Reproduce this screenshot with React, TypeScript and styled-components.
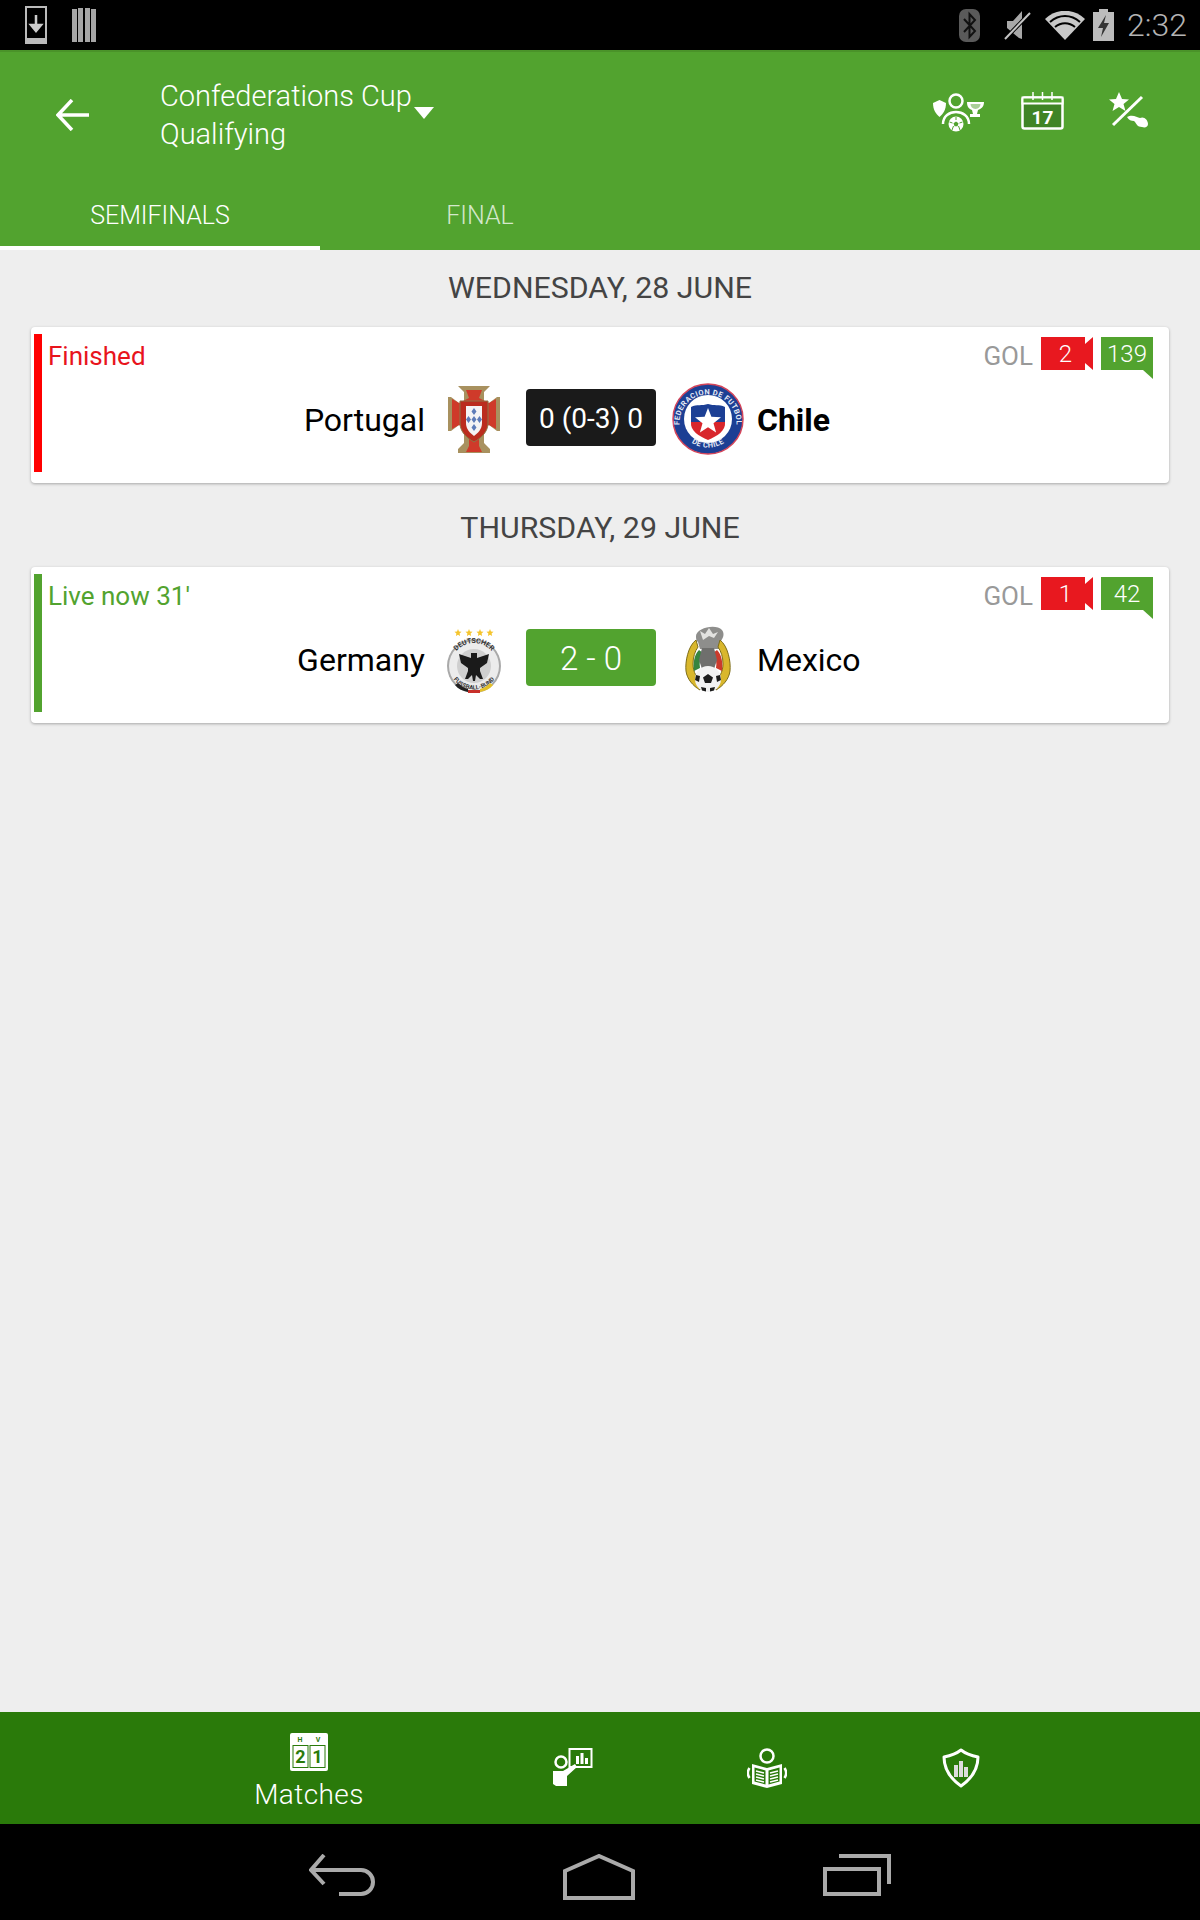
import React from "react";
import styled, { createGlobalStyle } from "styled-components";

const GREEN = "#52a32f";
const DARK_GREEN = "#2a7a0a";

const Global = createGlobalStyle`
  html, body {
    margin: 0;
    padding: 0;
    background: #eeeeee;
  }
  * {
    box-sizing: border-box;
  }
`;

const Page = styled.div`
  width: 1200px;
  height: 1920px;
  display: flex;
  flex-direction: column;
  font-family: Roboto, "Noto Sans", sans-serif;
  background: #eeeeee;
  overflow: hidden;
`;

const StatusBar = styled.div`
  height: 50px;
  flex: none;
  background: #000;
  display: flex;
  align-items: center;
  padding: 0 13px 0 25px;
`;

const StatusLeft = styled.div`
  display: flex;
  align-items: center;
  gap: 25px;
  flex: 1;
`;

const StatusRight = styled.div`
  display: flex;
  align-items: center;
`;

const StatusSlot = styled.div<{ $gap: number }>`
  display: flex;
  margin-right: ${(p) => p.$gap}px;
`;

const Clock = styled.span`
  font-size: 32px;
  font-weight: 300;
  color: #b4b4b4;
  margin-left: 1px;
`;

const Header = styled.header`
  height: 200px;
  flex: none;
  background: ${GREEN};
  display: flex;
  flex-direction: column;
  box-shadow: inset 0 2px 0 #4a9329;
`;

const Toolbar = styled.div`
  height: 134px;
  display: flex;
  align-items: center;
  padding: 0 51px 4px 56px;
`;

const BackButton = styled.div`
  width: 104px;
  display: flex;
  align-items: center;
`;

const Title = styled.div`
  display: flex;
  flex: 1;
  color: #fff;
  font-size: 29px;
  line-height: 38px;
  font-weight: 300;
`;

const Caret = styled.div`
  width: 0;
  height: 0;
  margin: 30px 0 0 2px;
  border-left: 10px solid transparent;
  border-right: 10px solid transparent;
  border-top: 12px solid #fff;
`;

const Actions = styled.div`
  display: flex;
  align-items: center;
  gap: 37px;
  margin-top: -8px;

  & > svg:last-child {
    margin-left: 8px;
  }
`;

const Tabs = styled.div`
  display: flex;
  height: 66px;
`;

const Tab = styled.div<{ $active?: boolean }>`
  width: 320px;
  display: flex;
  align-items: center;
  justify-content: center;
  padding-bottom: 0;
  font-size: 25px;
  font-weight: 300;
  color: ${(p) => (p.$active ? "#fff" : "#d4e8cb")};
  border-bottom: 4px solid ${(p) => (p.$active ? "#fff" : "transparent")};
`;

const Content = styled.main`
  flex: 1;
  padding: 0 31px;
`;

const DateHeading = styled.h2`
  margin: 0;
  height: 77px;
  display: flex;
  align-items: center;
  justify-content: center;
  padding-bottom: 3px;
  font-size: 30.3px;
  font-weight: 400;
  color: #444;
`;

const Card = styled.section`
  height: 156px;
  margin-bottom: 7px;
  background: #fff;
  border-radius: 4px;
  box-shadow: 0 1px 3px rgba(0, 0, 0, 0.3);
  padding: 7px 16px 11px 3px;
  display: flex;
`;

const StateBar = styled.div<{ $color: string }>`
  width: 8px;
  flex: none;
  background: ${(p) => p.$color};
`;

const CardBody = styled.div`
  flex: 1;
  display: flex;
  flex-direction: column;
`;

const CardTop = styled.div`
  display: flex;
  justify-content: space-between;
  align-items: flex-start;
  padding: 3px 0 0 6px;
  height: 49px;
`;

const MatchState = styled.span<{ $color: string }>`
  font-size: 26px;
  font-weight: 400;
  line-height: 38px;
  color: ${(p) => p.$color};
`;

const Odds = styled.div`
  display: flex;
  align-items: flex-start;
  gap: 8px;
`;

const Gol = styled.span`
  font-size: 26px;
  font-weight: 400;
  line-height: 38px;
  color: #999;
`;

const RedBadge = styled.div`
  width: 52px;
  height: 33px;
  padding-right: 3px;
  display: flex;
  align-items: center;
  justify-content: center;
  color: #fff;
  font-size: 24px;
  font-weight: 300;
  background: #e8181f;
  clip-path: polygon(0 0, 44px 0, 44px 7px, 52px 0, 52px 33px, 44px 26px, 44px 33px, 0 33px);
`;

const GreenBadge = styled.div`
  position: relative;
  width: 52px;
  height: 33px;
  display: flex;
  align-items: center;
  justify-content: center;
  color: #fff;
  font-size: 24px;
  font-weight: 300;
  background: ${GREEN};

  &::after {
    content: "";
    position: absolute;
    right: 0;
    top: 33px;
    border-top: 9px solid ${GREEN};
    border-left: 10px solid transparent;
  }
`;

const MatchRow = styled.div`
  display: grid;
  grid-template-columns: 1fr 130px 1fr;
  column-gap: 16px;
  align-items: center;
  height: 72px;
  padding-right: 13px;
`;

const Team = styled.div<{ $away?: boolean }>`
  display: flex;
  align-items: center;
  justify-content: ${(p) => (p.$away ? "flex-start" : "flex-end")};
  gap: 13px;
`;

const TeamName = styled.span<{ $winner?: boolean }>`
  font-size: 32px;
  font-weight: ${(p) => (p.$winner ? 700 : 400)};
  color: #000;
  padding-top: 2px;
`;

const Score = styled.div<{ $live?: boolean }>`
  height: 57px;
  margin-top: -3px;
  padding-top: 1px;
  display: flex;
  align-items: center;
  justify-content: center;
  border-radius: 4px;
  color: #fff;
  background: ${(p) => (p.$live ? GREEN : "#1a1a1a")};
  font-weight: ${(p) => (p.$live ? 300 : 400)};
  font-size: ${(p) => (p.$live ? "33px" : "28px")};
`;

const BottomNav = styled.nav`
  height: 112px;
  flex: none;
  background: ${DARK_GREEN};
  display: flex;
  justify-content: center;
`;

const NavItem = styled.div<{ $wide?: boolean }>`
  width: ${(p) => (p.$wide ? "334px" : "194px")};
  display: flex;
  flex-direction: column;
  align-items: center;
  padding-top: ${(p) => (p.$wide ? "21px" : "36px")};
  color: #fff;
  font-size: 28px;
  font-weight: 300;
`;

const NavLabel = styled.span`
  line-height: 32px;
  margin-top: 8px;
  letter-spacing: 0.4px;
`;

const SystemBar = styled.div`
  height: 96px;
  flex: none;
  background: #000;
  display: flex;
  justify-content: center;
  align-items: flex-start;
  padding-top: 30px;
  gap: 188px;
`;

const DownloadIcon = () => (
  <svg width="22" height="38" viewBox="0 0 22 38">
    <rect x="1" y="1" width="20" height="36" fill="none" stroke="#bbb" strokeWidth="2" />
    <rect x="1" y="32" width="20" height="5" fill="#bbb" />
    <path d="M11 9v15M6 19l5 6 5-6z" stroke="#ccc" strokeWidth="2.5" fill="#ccc" />
  </svg>
);

const BarsIcon = () => (
  <svg width="24" height="34" viewBox="0 0 24 34">
    <path d="M0 1h5v33H0zM6 0h5v34H6zM13 0h5v34h-5zM19 1h5v33h-5z" fill="#a6a6a6" />
  </svg>
);

const BluetoothIcon = () => (
  <svg width="21" height="33" viewBox="0 0 21 33">
    <rect width="21" height="33" rx="7" fill="#5a5a5a" />
    <path d="M5 10l11 12-5.500 6V5l5.500 6L5 23" fill="none" stroke="#111" strokeWidth="2" />
  </svg>
);

const MuteIcon = () => (
  <svg width="28" height="32" viewBox="0 0 28 32">
    <path d="M3 12h6l9-10v28l-3-1L3 19z" fill="#a8a8a8" />
    <path d="M1 30L26 4" stroke="#000" strokeWidth="4" />
    <path d="M1 30L26 4" stroke="#c4c4c4" strokeWidth="2" />
  </svg>
);

const WifiIcon = () => (
  <svg width="40" height="29" viewBox="0 0 40 29">
    <path d="M20 29L0 8c11-11 29-11 40 0z" fill="#c8c8c8" />
    <path d="M5 11c9-8 21-8 30 0M10 16c6-5 14-5 20 0" fill="none" stroke="#000" strokeWidth="2" />
  </svg>
);

const BatteryIcon = () => (
  <svg width="21" height="32" viewBox="0 0 21 32">
    <path d="M6 0h9v3h6v29H0V3h6z" fill="#bcbcbc" />
    <path d="M13 6L5 19h5l-2 9 8-14h-5z" fill="#333" />
  </svg>
);

const BackArrow = () => (
  <svg width="33" height="32" viewBox="0 0 33 32">
    <path d="M33 16H3M16 1L2 16l14 15" fill="none" stroke="#fff" strokeWidth="3.500" />
  </svg>
);

const PlayerIcon = () => (
  <svg width="52" height="41" viewBox="0 0 52 41">
    <path d="M1 12l6.500-3 6.500 3c0 7-3 11-6.500 14C4 23 1 19 1 12z" fill="#fff" />
    <circle cx="24" cy="10" r="6.500" fill="none" stroke="#fff" strokeWidth="2.500" />
    <path d="M11 33c0-16 26-16 26 0" fill="none" stroke="#fff" strokeWidth="2.500" />
    <circle cx="24" cy="33" r="7.500" fill="#fff" />
    <path d="M24 30.500l2.500 1.800-1 2.900h-3l-1-2.900z" fill={GREEN} />
    <path d="M24 26v3M17.500 31l3 1M30.500 31l-3 1M20 39l1.500-4M28 39l-1.500-4" stroke={GREEN} strokeWidth="1" />
    <path d="M35 11h17c0 5-3 7-6 8l-1 4h3v3h-10v-3h3l-1-4c-3-1-5-3-5-8z" fill="#fff" />
    <path d="M38.500 13h10c0 3-2 4.500-5 5-3-.5-5-2-5-5z" fill="#a9cf98" />
  </svg>
);

const CalendarIcon = () => (
  <svg width="43" height="38" viewBox="0 0 43 38">
    <rect x="1.500" y="5.500" width="40" height="31" rx="2" fill="#3f8426" stroke="#fff" strokeWidth="2.500" />
    <rect x="1.500" y="5.500" width="40" height="6" fill={GREEN} stroke="#fff" strokeWidth="2" />
    <path d="M12 0v8M21.500 0v8M31 0v8" stroke="#fff" strokeWidth="1.500" />
    <text x="21.500" y="32" textAnchor="middle" fill="#fff" fontSize="19" fontWeight="700" fontFamily="Roboto, sans-serif">
      17
    </text>
  </svg>
);

const PredictionIcon = () => (
  <svg width="40" height="38" viewBox="0 0 40 38">
    <path d="M10 0l3 7 7 .5-5.500 4.500 2 7-6.500-4-6.500 4 2-7L0 7.500 7 7z" fill="#fff" />
    <path d="M4 33L33 5" stroke="#fff" strokeWidth="3" />
    <path d="M18 25c5-3 10 0 13 1 4-2 8 2 8 6 0 3-3 4-6 3-5 0-5-3-8-6-3 0-5-1-7-4z" fill="#fff" />
  </svg>
);

const PortugalCrest = () => (
  <svg width="72" height="72" viewBox="0 0 72 72">
    <path d="M20 3h32l-6 6v9l5 2 8-6h3v34h-3l-8-6-5 2v16l6 6v4H20v-4l6-6V44l-5-2-8 6h-3V14h3l8 6 5-2V9z" fill="#a8915f" />
    <path d="M28 7h16l-3 8 10 5 7-4v30l-7-4-10 5v16l3 6H28l3-6V47l-10-5-7 4V16l7 4 10-5z" fill="#cf3a2a" />
    <path d="M22 18h28v22c0 9-7 15-14 19-7-4-14-10-14-19z" fill="#bb2d1e" stroke="#8d7646" strokeWidth="1" />
    <path d="M28 23h16v17c0 6-4 10-8 13-4-3-8-7-8-13z" fill="#f4f4f4" />
    <path d="M36 25l2.500 3.500-2.500 3.500-2.500-3.500zM36 33l2.500 3.500-2.500 3.500-2.500-3.500zM36 41l2.500 3.500-2.500 3.500-2.500-3.500zM30.500 33l2.500 3.500-2.500 3.500-2.500-3.500zM41.500 33l2.500 3.500-2.500 3.500-2.500-3.500z" fill="#5d7cb8" />
  </svg>
);

const ChileCrest = () => (
  <svg width="72" height="72" viewBox="0 0 72 72">
    <defs>
      <path id="chile-top" d="M7.500 40a28.500 28.500 0 1 1 57 0" />
      <path id="chile-bottom" d="M12 52a29 29 0 0 0 48 0" />
    </defs>
    <circle cx="36" cy="36" r="35" fill="#1c3f94" stroke="#d4455a" strokeWidth="1.500" />
    <circle cx="36" cy="36" r="24" fill="#fff" />
    <text fill="#e6eaf5" fontSize="7.500" fontWeight="700" fontFamily="Roboto, sans-serif" letterSpacing="0.4">
      <textPath href="#chile-top" startOffset="50%" textAnchor="middle">
        FEDERACION DE FUTBOL
      </textPath>
    </text>
    <text fill="#e6eaf5" fontSize="7.500" fontWeight="700" fontFamily="Roboto, sans-serif" letterSpacing="0.4">
      <textPath href="#chile-bottom" startOffset="50%" textAnchor="middle">
        DE CHILE
      </textPath>
    </text>
    <path d="M19 24c6-3 11-1 17-3 6 2 11 0 17 3v15H19z" fill="#1c3f94" />
    <path d="M19 39h34c1 9-8 14-17 18-9-4-18-9-17-18z" fill="#d8262c" />
    <path d="M36 25l3.400 8.800 9.600.4-7.500 6 2.600 9.300-8.100-5.300-8.100 5.300 2.600-9.300-7.500-6 9.600-.4z" fill="#fff" />
  </svg>
);

const GermanyCrest = () => (
  <svg width="72" height="72" viewBox="0 0 72 72">
    <defs>
      <path id="ger-top" d="M13 43a23 23 0 0 1 46 0" />
      <path id="ger-bottom" d="M11 46a25.500 25.500 0 0 0 50 0" />
    </defs>
    <path d="M20 6l1 2.500 2.500.3-1.900 1.700.5 2.500-2.100-1.300-2.100 1.300.5-2.500-1.900-1.700 2.500-.3zM31 6l1 2.500 2.500.3-1.900 1.700.5 2.500-2.100-1.300-2.100 1.300.5-2.500-1.900-1.700 2.500-.3zM42 6l1 2.500 2.500.3-1.900 1.700.5 2.500-2.100-1.300-2.100 1.300.5-2.500-1.900-1.700 2.500-.3zM52 6l1 2.500 2.500.3-1.900 1.700.5 2.500-2.100-1.300-2.100 1.300.5-2.500-1.900-1.700 2.500-.3z" fill="#f5c52e" />
    <circle cx="36" cy="43" r="27" fill="#a9a9a9" />
    <circle cx="36" cy="43" r="25" fill="#ececec" />
    <circle cx="36" cy="43" r="17" fill="#cfcfcf" />
    <text fill="#333" fontSize="7" fontWeight="700" fontFamily="Roboto, sans-serif">
      <textPath href="#ger-top" startOffset="50%" textAnchor="middle">
        DEUTSCHER
      </textPath>
    </text>
    <text fill="#333" fontSize="6" fontWeight="700" fontFamily="Roboto, sans-serif">
      <textPath href="#ger-bottom" startOffset="50%" textAnchor="middle">
        FUSSBALL-BUND
      </textPath>
    </text>
    <path d="M20 60c3 3 6 5 10 6v3c-5-1-10-3-13-7z" fill="#222" />
    <path d="M30 67h12v3H30z" fill="#c8302a" />
    <path d="M42 69c5-1 10-3 13-7l-3-2c-3 3-6 5-10 6z" fill="#e4c029" />
    <path d="M33 30h6v5l3-1 9-3-2 9-7 5v3l3 8h-3l-4-4-1 6h-2l-1-6-4 4h-3l3-8v-3l-7-5-2-9 9 3 3 1z" fill="#1a1a1a" />
  </svg>
);

const MexicoCrest = () => (
  <svg width="72" height="72" viewBox="0 0 72 72">
    <path d="M24 13c0-8 20-13 26-6 3 4 1 8-1 11l-2 8H28l-2-7c-2-1-2-4-2-6z" fill="#8e8e8c" />
    <path d="M28 8l5 3 4-6 4 6 5-2-4 6-5-2-6 4z" fill="#e2e2e0" />
    <path d="M24 17c-8 6-11 22-10 31 1 8 7 15 14 19l3-6c-6-5-10-12-10-20 0-7 2-13 5-17z" fill="#d9b72c" stroke="#7e6d18" strokeWidth="1" />
    <path d="M48 17c8 6 11 22 10 31-1 8-7 15-14 19l-3-6c6-5 10-12 10-20 0-7-2-13-5-17z" fill="#d9b72c" stroke="#7e6d18" strokeWidth="1" />
    <path d="M27 27c-5 5-6 13-5 21l6-3c-1-5 0-10 3-15z" fill="#37853f" />
    <path d="M45 27c5 5 6 13 5 21l-6-3c1-5 0-10-3-15z" fill="#cb3a2c" />
    <path d="M30 25h12l3 12-3 9H30l-3-9z" fill="#6f6f6d" />
    <circle cx="36" cy="56" r="13" fill="#f2f2f2" />
    <path d="M36 51l5 3.500-2 5.500h-6l-2-5.500zM24 52l4 1-1 6-4-2zM48 52l-4 1 1 6 4-2zM29 64l5 1v3.500l-4-1zM43 64l-5 1v3.500l4-1z" fill="#1c1c1c" />
  </svg>
);

const ScoreboardIcon = () => (
  <svg width="38" height="38" viewBox="0 0 38 38">
    <rect width="38" height="38" rx="2" fill="#fff" />
    <rect x="3" y="12.500" width="15" height="22" fill="#fff" stroke={DARK_GREEN} strokeWidth="1" />
    <rect x="20" y="12.500" width="15" height="22" fill="#fff" stroke={DARK_GREEN} strokeWidth="1" />
    <g fill={DARK_GREEN} fontFamily="Roboto, sans-serif" fontWeight="700" textAnchor="middle">
      <text x="10" y="9" fontSize="7">H</text>
      <text x="28" y="9" fontSize="7">V</text>
      <text x="10.500" y="30" fontSize="18">2</text>
      <text x="27.500" y="30" fontSize="18">1</text>
    </g>
  </svg>
);

const CoachIcon = () => (
  <svg width="40" height="38" viewBox="0 0 40 38">
    <rect x="16.500" y="1" width="22" height="18" fill="none" stroke="#fff" strokeWidth="2" />
    <path d="M23 8h3v8h-3zM27.500 5h3v11h-3zM32 10h3v6h-3z" fill="#fff" />
    <circle cx="8" cy="14" r="5.500" fill="none" stroke="#fff" strokeWidth="2.500" />
    <path d="M0 23h10l12-7 2 3-10 9v10H3l-3-2z" fill="#fff" />
  </svg>
);

const ReaderIcon = () => (
  <svg width="40" height="40" viewBox="0 0 40 40">
    <circle cx="20" cy="8" r="6.500" fill="none" stroke="#fff" strokeWidth="2.500" />
    <path d="M5 16l15 4 15-4v20l-15 4-15-4z" fill="#fff" />
    <path d="M7.500 19.500l11 3v14l-11-3zM21.500 22.500l11-3v14l-11 3z" fill={DARK_GREEN} />
    <path d="M9 23l8 2M9 26l8 2M9 29l8 2M9 32l8 2M23 25l8-2M23 28l8-2M23 31l8-2M23 34l8-2" stroke="#fff" strokeWidth="1.500" />
    <path d="M2.500 20c-2 3-2 7 0 10M37.500 20c2 3 2 7 0 10" fill="none" stroke="#fff" strokeWidth="2.500" />
  </svg>
);

const ShieldIcon = () => (
  <svg width="40" height="40" viewBox="0 0 40 40">
    <path d="M20 2c5 4 12 6 17 7 0 12-7 22-17 29C10 31 3 21 3 9c5-1 12-3 17-7z" fill="none" stroke="#fff" strokeWidth="3" strokeLinejoin="round" />
    <path d="M13 17h4v12h-4zM18 13h4v16h-4zM23 19h4v10h-4z" fill="#ddd" />
  </svg>
);

const SysBack = () => (
  <svg width="66" height="42" viewBox="0 0 66 42">
    <path d="M15 1L2 16l13 14M2 16h50a12 12 0 0 1 0 24H30" fill="none" stroke="#aaa" strokeWidth="4" />
  </svg>
);

const SysHome = () => (
  <svg width="72" height="46" viewBox="0 0 72 46">
    <path d="M2 44V17L36 2l34 15v27z" fill="none" stroke="#aaa" strokeWidth="4" />
  </svg>
);

const SysRecents = () => (
  <svg width="68" height="42" viewBox="0 0 68 42">
    <path d="M2 15h54v25H2zM16 2h50v28" fill="none" stroke="#aaa" strokeWidth="4" />
  </svg>
);

const App = () => (
  <Page>
    <Global />
    <StatusBar>
      <StatusLeft>
        <DownloadIcon />
        <BarsIcon />
      </StatusLeft>
      <StatusRight>
        <StatusSlot $gap={24}>
          <BluetoothIcon />
        </StatusSlot>
        <StatusSlot $gap={13}>
          <MuteIcon />
        </StatusSlot>
        <StatusSlot $gap={8}>
          <WifiIcon />
        </StatusSlot>
        <StatusSlot $gap={12}>
          <BatteryIcon />
        </StatusSlot>
        <Clock>2:32</Clock>
      </StatusRight>
    </StatusBar>
    <Header>
      <Toolbar>
        <BackButton>
          <BackArrow />
        </BackButton>
        <Title>
          <div>
            Confederations Cup
            <br />
            Qualifying
          </div>
          <Caret />
        </Title>
        <Actions>
          <PlayerIcon />
          <CalendarIcon />
          <PredictionIcon />
        </Actions>
      </Toolbar>
      <Tabs>
        <Tab $active>SEMIFINALS</Tab>
        <Tab>FINAL</Tab>
      </Tabs>
    </Header>
    <Content>
      <DateHeading>WEDNESDAY, 28 JUNE</DateHeading>
      <Card>
        <StateBar $color="#ff0000" />
        <CardBody>
          <CardTop>
            <MatchState $color="#e8141c">Finished</MatchState>
            <Odds>
              <Gol>GOL</Gol>
              <RedBadge>2</RedBadge>
              <GreenBadge>139</GreenBadge>
            </Odds>
          </CardTop>
          <MatchRow>
            <Team>
              <TeamName>Portugal</TeamName>
              <PortugalCrest />
            </Team>
            <Score>0 (0-3) 0</Score>
            <Team $away>
              <ChileCrest />
              <TeamName $winner>Chile</TeamName>
            </Team>
          </MatchRow>
        </CardBody>
      </Card>
      <DateHeading>THURSDAY, 29 JUNE</DateHeading>
      <Card>
        <StateBar $color={GREEN} />
        <CardBody>
          <CardTop>
            <MatchState $color={GREEN}>Live now 31'</MatchState>
            <Odds>
              <Gol>GOL</Gol>
              <RedBadge>1</RedBadge>
              <GreenBadge>42</GreenBadge>
            </Odds>
          </CardTop>
          <MatchRow>
            <Team>
              <TeamName>Germany</TeamName>
              <GermanyCrest />
            </Team>
            <Score $live>2 - 0</Score>
            <Team $away>
              <MexicoCrest />
              <TeamName>Mexico</TeamName>
            </Team>
          </MatchRow>
        </CardBody>
      </Card>
    </Content>
    <BottomNav>
      <NavItem $wide>
        <ScoreboardIcon />
        <NavLabel>Matches</NavLabel>
      </NavItem>
      <NavItem>
        <CoachIcon />
      </NavItem>
      <NavItem>
        <ReaderIcon />
      </NavItem>
      <NavItem>
        <ShieldIcon />
      </NavItem>
    </BottomNav>
    <SystemBar>
      <SysBack />
      <SysHome />
      <SysRecents />
    </SystemBar>
  </Page>
);

export default App;
